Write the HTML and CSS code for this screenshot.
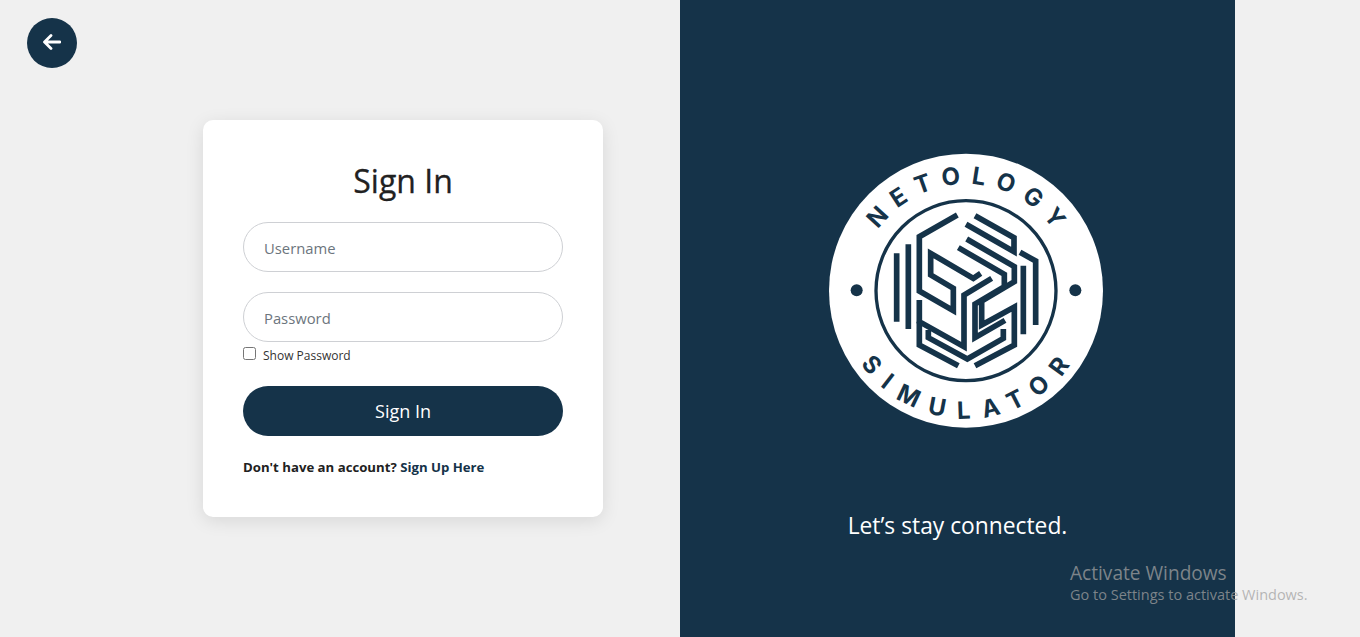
FILE: index.html
```html
<!DOCTYPE html>
<html lang="en">
<head>
<meta charset="utf-8">
<title>Sign In</title>
<link rel="stylesheet" href="styles.css">
</head>
<body>
<div class="page">
  <a class="back" href="#" aria-label="Back">
    <svg width="18" height="16" viewBox="0 0 18 16"><path d="M17 8H2M8 1.5 1.5 8 8 14.5" fill="none" stroke="#fff" stroke-width="2.8" stroke-linecap="round" stroke-linejoin="round"/></svg>
  </a>
  <main class="left">
    <form class="card">
      <h1 class="title">Sign In</h1>
      <input class="field" type="text" placeholder="Username">
      <input class="field field-second" type="password" placeholder="Password">
      <label class="show"><input class="check" type="checkbox"><span>Show Password</span></label>
      <button class="submit" type="button">Sign In</button>
      <p class="signup">Don't have an account? <a href="#">Sign Up Here</a></p>
    </form>
  </main>
  <aside class="panel">
    <svg class="logo" width="290" height="290" viewBox="0 0 870 870">
      <defs>
        <path id="arc-top" d="M118 437a320 320 0 0 1 640 0"/>
        <path id="arc-bottom" d="M54 437a384 384 0 0 0 768 0"/>
      </defs>
      <circle cx="438" cy="437" r="411" fill="#fff"/>
      <circle cx="438" cy="437" r="270" fill="none" stroke="#153349" stroke-width="10"/>
      <circle cx="110" cy="436" r="18" fill="#153349"/>
      <circle cx="766" cy="436" r="18" fill="#153349"/>
      <text class="ring-text"><textPath class="ring-top" href="#arc-top" startOffset="517">NETOLOGY</textPath></text>
      <text class="ring-text"><textPath class="ring-bottom" href="#arc-bottom" startOffset="621">SIMULATOR</textPath></text>
      <g fill="none" stroke="#153349" stroke-width="17" stroke-linejoin="miter">
        <path d="M230 325V530M265 298V552"/>
        <path d="M600 322 647 348V540M610 362V568"/>
        <path d="M482 385 460 400 332 325V390L400 430V497L298 438V275L412 210"/>
        <path d="M465 212 582 278V320L438 238"/>
        <path d="M440 282 583 365V410L485 468V540L583 486V600L465 662"/>
        <path d="M415 308 553 388V425L465 477V578L555 526"/>
        <path d="M550 552V580L442 642 325 578V555"/>
        <path d="M515 400 432 450V605L298 530V465"/>
        <path d="M298 530V600L415 662"/>
      </g>
    </svg>
    <p class="tagline">Let’s stay connected.</p>
  </aside>
  <div class="activate">
    <div class="activate-title">Activate Windows</div>
    <div class="activate-sub">Go to Settings to activate Windows.</div>
  </div>
</div>
</body>
</html>
```
FILE: styles.css
```css
* { box-sizing: border-box; }
html, body { margin: 0; height: 100%; }
body {
  background: #f0f0f0;
  color: #212529;
  font-family: "Open Sans", "Noto Sans", "Liberation Sans", sans-serif;
  overflow: hidden;
}
.page {
  position: relative;
  display: grid;
  grid-template-columns: 680px 555px 1fr;
  height: 637px;
}
.back {
  position: absolute;
  left: 27px;
  top: 18px;
  width: 50px;
  height: 50px;
  padding-bottom: 2px;
  border-radius: 50%;
  background: #153349;
  display: flex;
  align-items: center;
  justify-content: center;
}
.left {
  display: flex;
  align-items: center;
  padding-left: 203px;
}
.card {
  width: 400px;
  height: 397px;
  padding: 40px;
  background: #fff;
  border-radius: 10px;
  box-shadow: 0 4px 18px rgba(0, 0, 0, .1);
  display: flex;
  flex-direction: column;
}
.title {
  margin: 0 0 19px;
  height: 43px;
  font-size: 32px;
  line-height: 41px;
  font-weight: 500;
  text-align: center;
  color: #212121;
  -webkit-text-stroke: .3px #212121;
}
.field {
  width: 320px;
  height: 50px;
  flex: none;
  padding: 2px 20px 0;
  border: 1px solid #ced0d4;
  border-radius: 25px;
  background: #fff;
  font: 14.8px "Open Sans", sans-serif;
  outline: none;
}
.field::placeholder { color: #6c757d; opacity: 1; }
.field-second { margin-top: 20px; }
.show {
  display: flex;
  align-items: center;
  gap: 7px;
  height: 26px;
  margin-bottom: 18px;
  font-size: 12px;
  color: #333;
}
.check { width: 13px; height: 13px; margin: 0 0 3px; }
.submit {
  width: 320px;
  height: 50px;
  flex: none;
  border: 0;
  border-radius: 25px;
  background: #153349;
  color: #fff;
  font: 18px "Open Sans", sans-serif;
}
.signup {
  margin: 22px 0 0;
  font-size: 13.2px;
  line-height: 18px;
  font-weight: 700;
  color: #212121;
}
.signup a { color: #153349; text-decoration: none; }
.panel {
  background: #153349;
  display: flex;
  flex-direction: column;
  align-items: center;
  padding-top: 145px;
}
.logo { display: block; margin-left: 15px; flex: none; }
.ring-text {
  font-family: Inter, sans-serif;
  font-size: 72px;
  font-weight: 700;
  text-anchor: middle;
  fill: #153349;
}
.ring-top { letter-spacing: 31px; }
.ring-bottom { letter-spacing: 39px; }
.tagline {
  margin: 74px 0 0;
  font-size: 22.8px;
  line-height: 34px;
  color: #fff;
}
.activate {
  position: absolute;
  left: 1070px;
  top: 560px;
  color: rgba(160, 160, 160, .75);
}
.activate-title { font-size: 19.1px; line-height: 26px; }
.activate-sub { font-size: 14.5px; line-height: 18px; }
```
